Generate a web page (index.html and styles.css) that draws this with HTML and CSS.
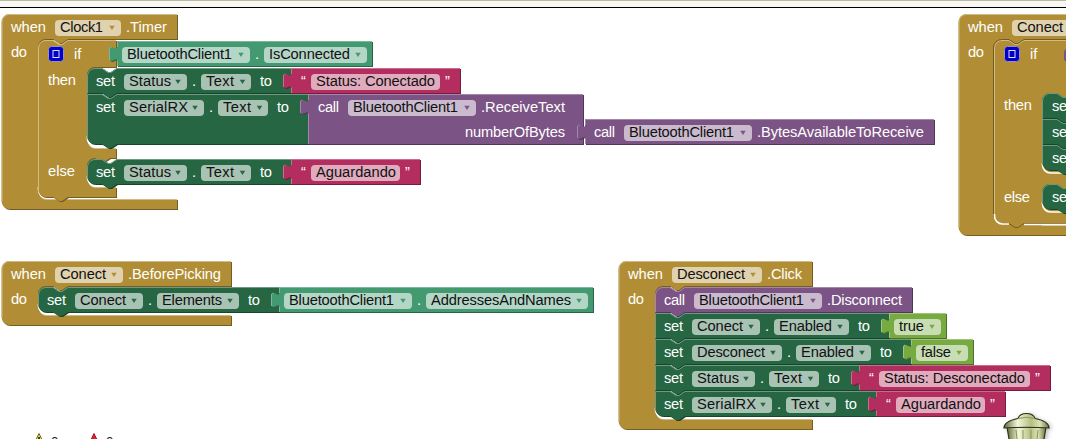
FILE: index.html
```
<!DOCTYPE html>
<html lang="pt">
<head>
<meta charset="utf-8">
<title>Blocks</title>
<link rel="stylesheet" href="styles.css">
</head>
<body>
<div class="topbar"></div>
<svg class="workspace" width="1066" height="431" viewBox="0 8 1066 431">
<defs>
<path id="arrow" d="M-2.700,11.700h5.400l-2.700,4.300z"/>
<path id="tablight" d="M0.500,25V19.500M-7.500,19V7Q-7,5.800 -5.500,6.500M0.500,6V0.500"/>
<g id="mutator"><rect class="mut" width="15" height="15" rx="3"/><rect class="mutin" x="4.500" y="4" width="6" height="7"/></g>
<linearGradient id="can"><stop offset="0" stop-color="#5f6d35"/><stop offset=".3" stop-color="#f3f6d8"/><stop offset=".6" stop-color="#b5bf83"/><stop offset=".8" stop-color="#dde3b4"/><stop offset="1" stop-color="#68743d"/></linearGradient>
</defs>

<!-- when Clock1.Timer -->
<path class="event" d="M1.500,22a8,8 0 0 1 8,-8H177V39H68l-6,4h-3l-6,-4H46a8,8 0 0 0 -8,8V191a8,8 0 0 0 8,8H177V209H9.500a8,8 0 0 1 -8,-8z"/>
<path class="lt e" d="M2,201V22a7.500,7.500 0 0 1 7.500,-7.500H177M41,197q2,2.500 6,2.500H177"/>
<path class="gap" d="M38.500,187V190a8,8 0 0 0 8,8H116"/>
<path class="event" d="M38,48a8,8 0 0 1 8,-8H53l6,4h3l6,-4H116V67H95a8,8 0 0 0 -8,8V140a8,8 0 0 0 8,8H116V158H110l-6,4h-3l-6,-4H95a8,8 0 0 0 -8,8V179a8,8 0 0 0 8,8H116V197H68l-6,4h-3l-6,-4H46a8,8 0 0 1 -8,-8z"/>
<path class="lt e" d="M38.500,190V48a7.500,7.500 0 0 1 7.500,-7.500H53l6,4h3l6,-4H116M90,146q2,2.500 5,2.500H116M90,185q2,2.500 5,2.500H116"/>
<path class="gap" d="M87.500,136V139a8,8 0 0 0 8,8H116M87.500,176V178a8,8 0 0 0 8,8H116"/>
<g transform="translate(0,14)">
<text x="11" y="18" textLength="35">when</text><rect class="f" x="55" y="6" width="66" height="16" rx="4"/><text class="k" x="60" y="18" textLength="43">Clock1</text><use class="ea" href="#arrow" x="112"/><text x="126" y="18" textLength="41">.Timer</text>
<text x="11" y="43" textLength="16">do</text>
</g>
<use href="#mutator" x="48.500" y="46.500"/>
<text x="74" y="59">if</text><text x="48" y="85" textLength="28">then</text><text x="48" y="176" textLength="27">else</text>

<g transform="translate(117,41)"><path class="getter" d="M0,0H255V25H0V19c-1,-2 -3,1 -6,1q-2,0 -2,-7t2,-7c3,0 5,3 6,1z"/><path class="lt g" d="M0,.5H255"/><use class="lt g" href="#tablight"/></g>
<g transform="translate(0,41)"><rect class="f" x="122" y="6" width="128" height="16" rx="4"/><text class="k" x="127" y="18" textLength="105">BluetoothClient1</text><use class="ga" href="#arrow" x="241"/><text x="255" y="18">.</text><rect class="f" x="264" y="6" width="103" height="16" rx="4"/><text class="k" x="269" y="18" textLength="81">IsConnected</text><use class="ga" href="#arrow" x="358"/></g>

<path class="set" d="M87,76a8,8 0 0 1 8,-8H102l6,4h3l6,-4H291V93H117l-6,4h-3l-6,-4H87z"/>
<path class="lt s" d="M87.500,93V76a7.500,7.500 0 0 1 7.500,-7.500H102l6,4h3l6,-4H291"/>
<g transform="translate(0,68)"><text x="96" y="18" textLength="19">set</text><rect class="f" x="124" y="6" width="63" height="16" rx="4"/><text class="k" x="129" y="18" textLength="42">Status</text><use class="sa" href="#arrow" x="178"/><text x="192" y="18">.</text><rect class="f" x="201" y="6" width="50" height="16" rx="4"/><text class="k" x="206" y="18" textLength="28">Text</text><use class="sa" href="#arrow" x="242.500"/><text x="260" y="18" textLength="12">to</text></g>
<g transform="translate(291,68)"><path class="str" d="M0,0H169V25H0V19c-1,-2 -3,1 -6,1q-2,0 -2,-7t2,-7c3,0 5,3 6,1z"/><path class="lt p" d="M0,.5H169"/><use class="lt p" href="#tablight"/><text x="10" y="18">“</text><rect class="f" x="20" y="6" width="129" height="16" rx="4"/><text class="k" x="25" y="18" textLength="119">Status: Conectado</text><text x="154" y="18">”</text></g>

<path class="set" d="M87,94H102l6,4h3l6,-4H308V144H117l-6,4h-3l-6,-4H95a8,8 0 0 1 -8,-8z"/>
<path class="lt s" d="M87.500,137V94.500H102l6,4h3l6,-4H308"/>
<g transform="translate(0,94)"><text x="96" y="18" textLength="19">set</text><rect class="f" x="124" y="6" width="80" height="16" rx="4"/><text class="k" x="129" y="18" textLength="59">SerialRX</text><use class="sa" href="#arrow" x="195"/><text x="209" y="18">.</text><rect class="f" x="218" y="6" width="50" height="16" rx="4"/><text class="k" x="223" y="18" textLength="28">Text</text><use class="sa" href="#arrow" x="259.500"/><text x="277" y="18" textLength="12">to</text></g>
<g transform="translate(308,94)"><path class="call" d="M0,0H275V50H0V19c-1,-2 -3,1 -6,1q-2,0 -2,-7t2,-7c3,0 5,3 6,1z"/><path class="lt c" d="M0,.5H275M.5,24V50"/><use class="lt c" href="#tablight"/><text x="10" y="18" textLength="21">call</text><rect class="f" x="40" y="6" width="128" height="16" rx="4"/><text class="k" x="45" y="18" textLength="105">BluetoothClient1</text><use class="ca" href="#arrow" x="159"/><text x="173" y="18" textLength="84">.ReceiveText</text><text x="157" y="43" textLength="100">numberOfBytes</text></g>
<g transform="translate(585,119)"><path class="call" d="M0,0H349V25H0V19c-1,-2 -3,1 -6,1q-2,0 -2,-7t2,-7c3,0 5,3 6,1z"/><path class="lt c" d="M0,.5H349"/><use class="lt c" href="#tablight"/><text x="9" y="18" textLength="21">call</text><rect class="f" x="39" y="6" width="128" height="16" rx="4"/><text class="k" x="44" y="18" textLength="105">BluetoothClient1</text><use class="ca" href="#arrow" x="158"/><text x="172" y="18" textLength="167">.BytesAvailableToReceive</text></g>

<path class="set" d="M87,167a8,8 0 0 1 8,-8H102l6,4h3l6,-4H291V184H117l-6,4h-3l-6,-4H95a8,8 0 0 1 -8,-8z"/>
<path class="lt s" d="M87.500,177V167a7.500,7.500 0 0 1 7.500,-7.500H102l6,4h3l6,-4H291"/>
<g transform="translate(0,159)"><text x="96" y="18" textLength="19">set</text><rect class="f" x="124" y="6" width="63" height="16" rx="4"/><text class="k" x="129" y="18" textLength="42">Status</text><use class="sa" href="#arrow" x="178"/><text x="192" y="18">.</text><rect class="f" x="201" y="6" width="50" height="16" rx="4"/><text class="k" x="206" y="18" textLength="28">Text</text><use class="sa" href="#arrow" x="242.500"/><text x="260" y="18" textLength="12">to</text></g>
<g transform="translate(291,159)"><path class="str" d="M0,0H129V25H0V19c-1,-2 -3,1 -6,1q-2,0 -2,-7t2,-7c3,0 5,3 6,1z"/><path class="lt p" d="M0,.5H129"/><use class="lt p" href="#tablight"/><text x="10" y="18">“</text><rect class="f" x="20" y="6" width="89" height="16" rx="4"/><text class="k" x="25" y="18" textLength="80">Aguardando</text><text x="114" y="18">”</text></g>

<!-- when Conect, cut by the edge of the workspace -->
<path class="event" d="M958.500,22a8,8 0 0 1 8,-8H1080V235H966.500a8,8 0 0 1 -8,-8z"/>
<path class="lt e" d="M959,227V22a7.500,7.500 0 0 1 7.500,-7.500H1080M994.500,217V48a7.500,7.500 0 0 1 7.500,-7.500H1009l6,4h3l6,-4H1080"/>
<path class="dk" d="M993.500,217V47a8,8 0 0 1 8,-7.500H1009l6,4h3l6,-4H1080M999,223.500H1009l6,4h3l6,-4H1080"/>
<path class="lt e" d="M1042,225.500H1080"/>
<path class="gap" d="M994.500,214V216a8,8 0 0 0 8,8H1009M1024,224.500H1080M1042.500,163V165a8,8 0 0 0 8,8H1080M1042.500,202V204a8,8 0 0 0 8,8H1080"/>
<g transform="translate(957,14)"><text x="11" y="18" textLength="35">when</text><rect class="f" x="55" y="6" width="68" height="16" rx="4"/><text class="k" x="60" y="18" textLength="46">Conect</text><text x="11" y="43" textLength="16">do</text></g>
<use href="#mutator" x="1004.500" y="46.500"/>
<text x="1030" y="59">if</text><text x="1004" y="110" textLength="28">then</text><text x="1004" y="202" textLength="26">else</text>
<path class="call" d="M1068,61c-5,0 -4,-2 -4,-6s0,-6 4,-6z"/>
<path class="set" d="M1042,101a8,8 0 0 1 8,-8H1057l6,4h3l6,-4H1080V170H1072l-6,4h-3l-6,-4H1050a8,8 0 0 1 -8,-8z"/>
<path class="dks" d="M1042,118.500H1057l6,4h3M1042,144.500H1057l6,4h3"/>
<path class="lt s" d="M1042.500,163V101a7.500,7.500 0 0 1 7.500,-7.500H1057l6,4h3M1042,119.500H1057l6,4h3M1042,145.500H1057l6,4h3"/>
<path class="set" d="M1042,192a8,8 0 0 1 8,-8H1057l6,4h3l6,-4H1080V209H1072l-6,4h-3l-6,-4H1050a8,8 0 0 1 -8,-8z"/>
<path class="lt s" d="M1042.500,202V192a7.500,7.500 0 0 1 7.500,-7.500H1057l6,4h3"/>
<text x="1052" y="111" textLength="19">set</text><text x="1052" y="137" textLength="19">set</text><text x="1052" y="163" textLength="19">set</text><text x="1052" y="202" textLength="19">set</text>

<!-- when Conect.BeforePicking -->
<path class="event" d="M1.500,269a8,8 0 0 1 8,-8H231V286H68l-6,4h-3l-6,-4H46a8,8 0 0 0 -8,8V307a8,8 0 0 0 8,8H231V325H9.500a8,8 0 0 1 -8,-8z"/>
<path class="lt e" d="M2,317V269a7.500,7.500 0 0 1 7.500,-7.500H231M41,313q2,2.500 6,2.500H231"/>
<path class="gap" d="M38.500,304V306a8,8 0 0 0 8,8H231"/>
<path class="set" d="M38,295a8,8 0 0 1 8,-8H53l6,4h3l6,-4H279V312H68l-6,4h-3l-6,-4H46a8,8 0 0 1 -8,-8z"/>
<path class="lt s" d="M38.500,305V295a7.500,7.500 0 0 1 7.500,-7.500H53l6,4h3l6,-4H279"/>
<g transform="translate(0,261)"><text x="11" y="18" textLength="35">when</text><rect class="f" x="55" y="6" width="68" height="16" rx="4"/><text class="k" x="60" y="18" textLength="46">Conect</text><use class="ea" href="#arrow" x="114"/><text x="128" y="18" textLength="93">.BeforePicking</text><text x="11" y="43" textLength="16">do</text></g>
<g transform="translate(0,287)"><text x="47" y="18" textLength="19">set</text><rect class="f" x="75" y="6" width="68" height="16" rx="4"/><text class="k" x="80" y="18" textLength="46">Conect</text><use class="sa" href="#arrow" x="134"/><text x="148" y="18">.</text><rect class="f" x="157" y="6" width="82" height="16" rx="4"/><text class="k" x="162" y="18" textLength="60">Elements</text><use class="sa" href="#arrow" x="230"/><text x="248" y="18" textLength="12">to</text></g>
<g transform="translate(279,287)"><path class="getter" d="M0,0H314V25H0V19c-1,-2 -3,1 -6,1q-2,0 -2,-7t2,-7c3,0 5,3 6,1z"/><path class="lt g" d="M0,.5H314"/><use class="lt g" href="#tablight"/><rect class="f" x="5" y="6" width="128" height="16" rx="4"/><text class="k" x="10" y="18" textLength="105">BluetoothClient1</text><use class="ga" href="#arrow" x="124"/><text x="138" y="18">.</text><rect class="f" x="147" y="6" width="162" height="16" rx="4"/><text class="k" x="152" y="18" textLength="140">AddressesAndNames</text><use class="ga" href="#arrow" x="300"/></g>

<!-- when Desconect.Click -->
<path class="event" d="M618.500,269a8,8 0 0 1 8,-8H812V286H685l-6,4h-3l-6,-4H663a8,8 0 0 0 -8,8V411a8,8 0 0 0 8,8H812V429H626.500a8,8 0 0 1 -8,-8z"/>
<path class="lt e" d="M619,421V269a7.500,7.500 0 0 1 7.500,-7.500H812M658,417q2,2.500 6,2.500H812"/>
<path class="gap" d="M655.500,408V410a8,8 0 0 0 8,8H812"/>
<path class="call" d="M655,295a8,8 0 0 1 8,-8H670l6,4h3l6,-4H912V312H685l-6,4h-3l-6,-4H655z"/>
<path class="lt c" d="M655.500,312V295a7.500,7.500 0 0 1 7.500,-7.500H670l6,4h3l6,-4H912"/>
<path class="set" d="M655,313H670l6,4h3l6,-4H889V338H685l-6,4h-3l-6,-4H655z"/><path class="lt s" d="M655.500,338V313.500H670l6,4h3l6,-4H889"/>
<path class="set" d="M655,339H670l6,4h3l6,-4H911V364H685l-6,4h-3l-6,-4H655z"/><path class="lt s" d="M655.500,364V339.500H670l6,4h3l6,-4H911"/>
<path class="set" d="M655,365H670l6,4h3l6,-4H860V390H685l-6,4h-3l-6,-4H655z"/><path class="lt s" d="M655.500,390V365.500H670l6,4h3l6,-4H860"/>
<path class="set" d="M655,391H670l6,4h3l6,-4H876V416H685l-6,4h-3l-6,-4H663a8,8 0 0 1 -8,-8z"/><path class="lt s" d="M655.500,409V391.500H670l6,4h3l6,-4H876"/>
<g transform="translate(0,261)"><text x="628" y="18" textLength="35">when</text><rect class="f" x="672" y="6" width="90" height="16" rx="4"/><text class="k" x="677" y="18" textLength="68">Desconect</text><use class="ea" href="#arrow" x="753"/><text x="767" y="18" textLength="35">.Click</text><text x="628" y="43" textLength="16">do</text></g>
<g transform="translate(0,287)"><text x="664" y="18" textLength="21">call</text><rect class="f" x="694" y="6" width="128" height="16" rx="4"/><text class="k" x="699" y="18" textLength="105">BluetoothClient1</text><use class="ca" href="#arrow" x="813"/><text x="827" y="18" textLength="75">.Disconnect</text></g>
<g transform="translate(0,313)"><text x="664" y="18" textLength="19">set</text><rect class="f" x="692" y="6" width="68" height="16" rx="4"/><text class="k" x="697" y="18" textLength="46">Conect</text><use class="sa" href="#arrow" x="751"/><text x="765" y="18">.</text><rect class="f" x="774" y="6" width="75" height="16" rx="4"/><text class="k" x="779" y="18" textLength="53">Enabled</text><use class="sa" href="#arrow" x="840"/><text x="858" y="18" textLength="12">to</text></g>
<g transform="translate(889,313)"><path class="bool" d="M0,0H57V25H0V19c-1,-2 -3,1 -6,1q-2,0 -2,-7t2,-7c3,0 5,3 6,1z"/><path class="lt b" d="M0,.5H57"/><use class="lt b" href="#tablight"/><rect class="f" x="5" y="6" width="47" height="16" rx="4"/><text class="k" x="10" y="18" textLength="25">true</text><use class="ba" href="#arrow" x="43"/></g>
<g transform="translate(0,339)"><text x="664" y="18" textLength="19">set</text><rect class="f" x="692" y="6" width="90" height="16" rx="4"/><text class="k" x="697" y="18" textLength="68">Desconect</text><use class="sa" href="#arrow" x="773"/><text x="787" y="18">.</text><rect class="f" x="796" y="6" width="75" height="16" rx="4"/><text class="k" x="801" y="18" textLength="53">Enabled</text><use class="sa" href="#arrow" x="862"/><text x="880" y="18" textLength="12">to</text></g>
<g transform="translate(911,339)"><path class="bool" d="M0,0H62V25H0V19c-1,-2 -3,1 -6,1q-2,0 -2,-7t2,-7c3,0 5,3 6,1z"/><path class="lt b" d="M0,.5H62"/><use class="lt b" href="#tablight"/><rect class="f" x="5" y="6" width="52" height="16" rx="4"/><text class="k" x="10" y="18" textLength="30">false</text><use class="ba" href="#arrow" x="48"/></g>
<g transform="translate(0,365)"><text x="664" y="18" textLength="19">set</text><rect class="f" x="692" y="6" width="63" height="16" rx="4"/><text class="k" x="697" y="18" textLength="42">Status</text><use class="sa" href="#arrow" x="746"/><text x="760" y="18">.</text><rect class="f" x="769" y="6" width="50" height="16" rx="4"/><text class="k" x="774" y="18" textLength="28">Text</text><use class="sa" href="#arrow" x="810.500"/><text x="828" y="18" textLength="12">to</text></g>
<g transform="translate(859,365)"><path class="str" d="M0,0H191V25H0V19c-1,-2 -3,1 -6,1q-2,0 -2,-7t2,-7c3,0 5,3 6,1z"/><path class="lt p" d="M0,.5H191"/><use class="lt p" href="#tablight"/><text x="10" y="18">“</text><rect class="f" x="20" y="6" width="151" height="16" rx="4"/><text class="k" x="25" y="18" textLength="141">Status: Desconectado</text><text x="176" y="18">”</text></g>
<g transform="translate(0,391)"><text x="664" y="18" textLength="19">set</text><rect class="f" x="692" y="6" width="80" height="16" rx="4"/><text class="k" x="697" y="18" textLength="59">SerialRX</text><use class="sa" href="#arrow" x="763"/><text x="777" y="18">.</text><rect class="f" x="786" y="6" width="50" height="16" rx="4"/><text class="k" x="791" y="18" textLength="28">Text</text><use class="sa" href="#arrow" x="827.500"/><text x="845" y="18" textLength="12">to</text></g>
<g transform="translate(876,391)"><path class="str" d="M0,0H129V25H0V19c-1,-2 -3,1 -6,1q-2,0 -2,-7t2,-7c3,0 5,3 6,1z"/><path class="lt p" d="M0,.5H129"/><use class="lt p" href="#tablight"/><text x="10" y="18">“</text><rect class="f" x="20" y="6" width="89" height="16" rx="4"/><text class="k" x="25" y="18" textLength="80">Aguardando</text><text x="114" y="18">”</text></g>

<!-- warning and error counters -->
<path class="warn" d="M39,433.500L33,446H45z"/><path d="M38.300,437h1.500v4h-1.500z"/><text class="cnt" x="51" y="446">0</text>
<path class="err" d="M94,433.500L88,446H100z"/><text class="cnt" x="106" y="446">0</text>

<!-- trash can -->
<g class="trash">
<path fill="url(#can)" d="M1007,427L1010,445H1043L1046,427z"/>
<path class="rib" d="M1016,430l1,9M1023,430v9M1031,430v9M1038,430l-1,9"/>
<path fill="url(#can)" d="M1004,428c0,-5 6,-8 14,-9.500c1,-3 3,-5 8.500,-5s7.500,2 8.500,5c8,1.500 14,4.500 14,9.500q-22,-1.500 -45,0z"/>
<path class="rib" d="M1018,418.500q8,-2.500 17,0"/>
</g>
</svg>
</body>
</html>
```
FILE: styles.css
```
body {
  margin: 0;
  height: 439px;
  overflow: hidden;
  display: flex;
  flex-direction: column;
  background: #fff;
}
.topbar {
  box-sizing: border-box;
  height: 8px;
  flex: none;
  background: #f9f8f3;
  border-top: 1px solid #b9b9a6;
  border-bottom: 1px solid #000;
}
.workspace { display: block; flex: none; }

text { font: 14.67px "Liberation Sans", Arial, sans-serif; fill: #fff; }
.k { fill: #111; }
.cnt { font-size: 13.33px; fill: #222; }

.event { fill: #b18e35; filter: drop-shadow(1px 1px 0 #745d22); }
.set { fill: #266643; filter: drop-shadow(1px 1px 0 #18432c); }
.getter { fill: #439970; filter: drop-shadow(1px 1px 0 #2c644a); }
.call { fill: #7c5385; filter: drop-shadow(1px 1px 0 #503657); }
.str { fill: #b32d5e; filter: drop-shadow(1px 1px 0 #751d3d); }
.bool { fill: #77ab41; filter: drop-shadow(1px 1px 0 #4e702b); }

.lt { fill: none; stroke-width: 1; }
.e { stroke: #d0bb86; }
.s { stroke: #6f9a82; }
.g { stroke: #7bb89b; }
.c { stroke: #a387aa; }
.p { stroke: #ca6c8e; }
.b { stroke: #a0c47a; }
.gap { fill: none; stroke: #fff; stroke-width: 1.6; }
.dk { fill: none; stroke: #745d22; }
.dks { fill: none; stroke: #18432c; }

.f { fill: #fff; fill-opacity: .6; }
.ea { fill: #b18e35; }
.sa { fill: #266643; }
.ga { fill: #439970; }
.ca { fill: #7c5385; }
.ba { fill: #77ab41; }

.mut { fill: #0000c8; stroke: #9a90b8; }
.mutin { fill: none; stroke: #dcdcff; }
.warn { fill: #f2ee3c; stroke: #66641c; }
.err { fill: #e02030; stroke: #b01020; }
.trash { stroke: #2c321b; stroke-width: 1.2; filter: drop-shadow(2px 1px 2px #8888); }
.rib { fill: none; stroke: #89935b; stroke-width: 1; }
```
